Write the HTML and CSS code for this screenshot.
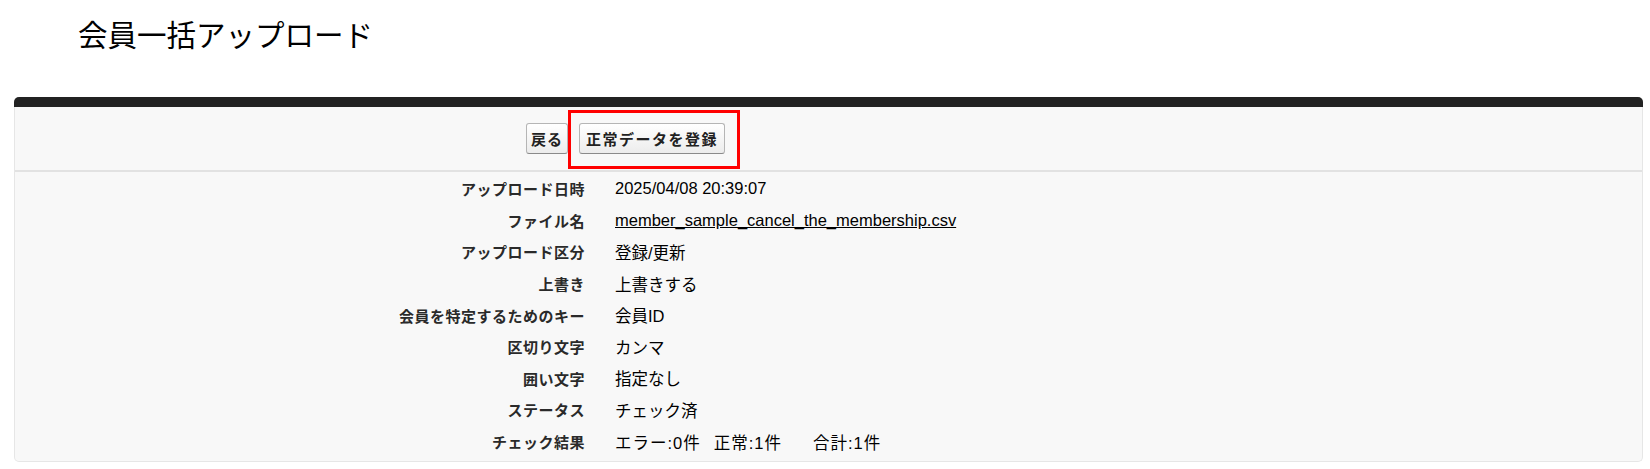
FILE: index.html
```html
<!DOCTYPE html>
<html lang="ja">
<head>
<meta charset="utf-8">
<title>会員一括アップロード</title>
<link rel="stylesheet" href="styles.css">
</head>
<body>
  <h1 class="page-title">会員一括アップロード</h1>
  <div class="panel">
    <div class="panel-bar"></div>
    <div class="button-row">
      <button class="btn" type="button">戻る</button>
      <span class="highlight"><button class="btn btn-wide" type="button">正常データを登録</button></span>
    </div>
    <dl class="detail">
      <dt>アップロード日時</dt><dd>2025/04/08 20:39:07</dd>
      <dt>ファイル名</dt><dd><a class="file-link" href="#">member_sample_cancel_the_membership.csv</a></dd>
      <dt>アップロード区分</dt><dd>登録/更新</dd>
      <dt>上書き</dt><dd>上書きする</dd>
      <dt>会員を特定するためのキー</dt><dd>会員ID</dd>
      <dt>区切り文字</dt><dd>カンマ</dd>
      <dt>囲い文字</dt><dd>指定なし</dd>
      <dt>ステータス</dt><dd>チェック済</dd>
      <dt>チェック結果</dt><dd><span class="count">エラー:0件</span><span class="count">正常:1件</span><span class="count">合計:1件</span></dd>
    </dl>
  </div>
</body>
</html>
```
FILE: styles.css
```css
html, body {
  margin: 0;
  padding: 0;
  background: #ffffff;
}

body {
  font-family: "Liberation Sans", "Noto Sans CJK JP", sans-serif;
  color: #000;
}

.page-title {
  margin: 0;
  padding: 13px 0 0 78px;
  height: 40px;
  font-family: "Noto Sans CJK JP", sans-serif;
  font-size: 29.5px;
  font-weight: normal;
  line-height: 40px;
  color: #000;
}

.panel {
  margin: 44px 7px 0 14px;
  background: #f8f8f8;
  border: 1px solid #e6e6e6;
  border-top: none;
  border-radius: 5px;
}

.panel-bar {
  height: 10px;
  margin: 0 -1px;
  background: #222222;
  border-radius: 5px 5px 0 0;
}

.button-row {
  display: flex;
  align-items: center;
  gap: 11px;
  height: 63px;
  padding-left: 511px;
  border-bottom: 2px solid #e2e2e2;
}

.btn {
  height: 31px;
  margin: 0;
  padding: 0 4px;
  font-family: "Liberation Sans", "Noto Sans CJK JP", sans-serif;
  font-size: 15px;
  font-weight: bold;
  letter-spacing: 1px;
  color: #222;
  background: linear-gradient(#ffffff, #ececec);
  border: 1px solid #b5b5b5;
  border-bottom-color: #8a8a8a;
  border-radius: 3px;
}

.btn-wide {
  padding: 0 6px;
  letter-spacing: 1.5px;
}

.highlight {
  position: relative;
  display: inline-flex;
}

.highlight::after {
  content: "";
  position: absolute;
  top: -13px;
  left: -11px;
  right: -15px;
  bottom: -15px;
  border: 3px solid #ff0000;
  pointer-events: none;
}

.detail {
  display: grid;
  grid-template-columns: 570px 1fr;
  grid-auto-rows: 31.6px;
  column-gap: 30px;
  align-items: center;
  margin: 0;
  padding: 1px 0 4px;
}

.detail dt {
  margin: 0;
  text-align: right;
  font-size: 15px;
  font-weight: bold;
  letter-spacing: 0.5px;
  color: #2a2a2a;
}

.detail dd {
  margin: 0;
  font-size: 16.5px;
  color: #000;
}

.file-link {
  color: #000;
  text-decoration: underline;
}

.count {
  letter-spacing: 1px;
  margin-right: 13px;
}

.count:nth-child(2) {
  margin-right: 31px;
}
```
